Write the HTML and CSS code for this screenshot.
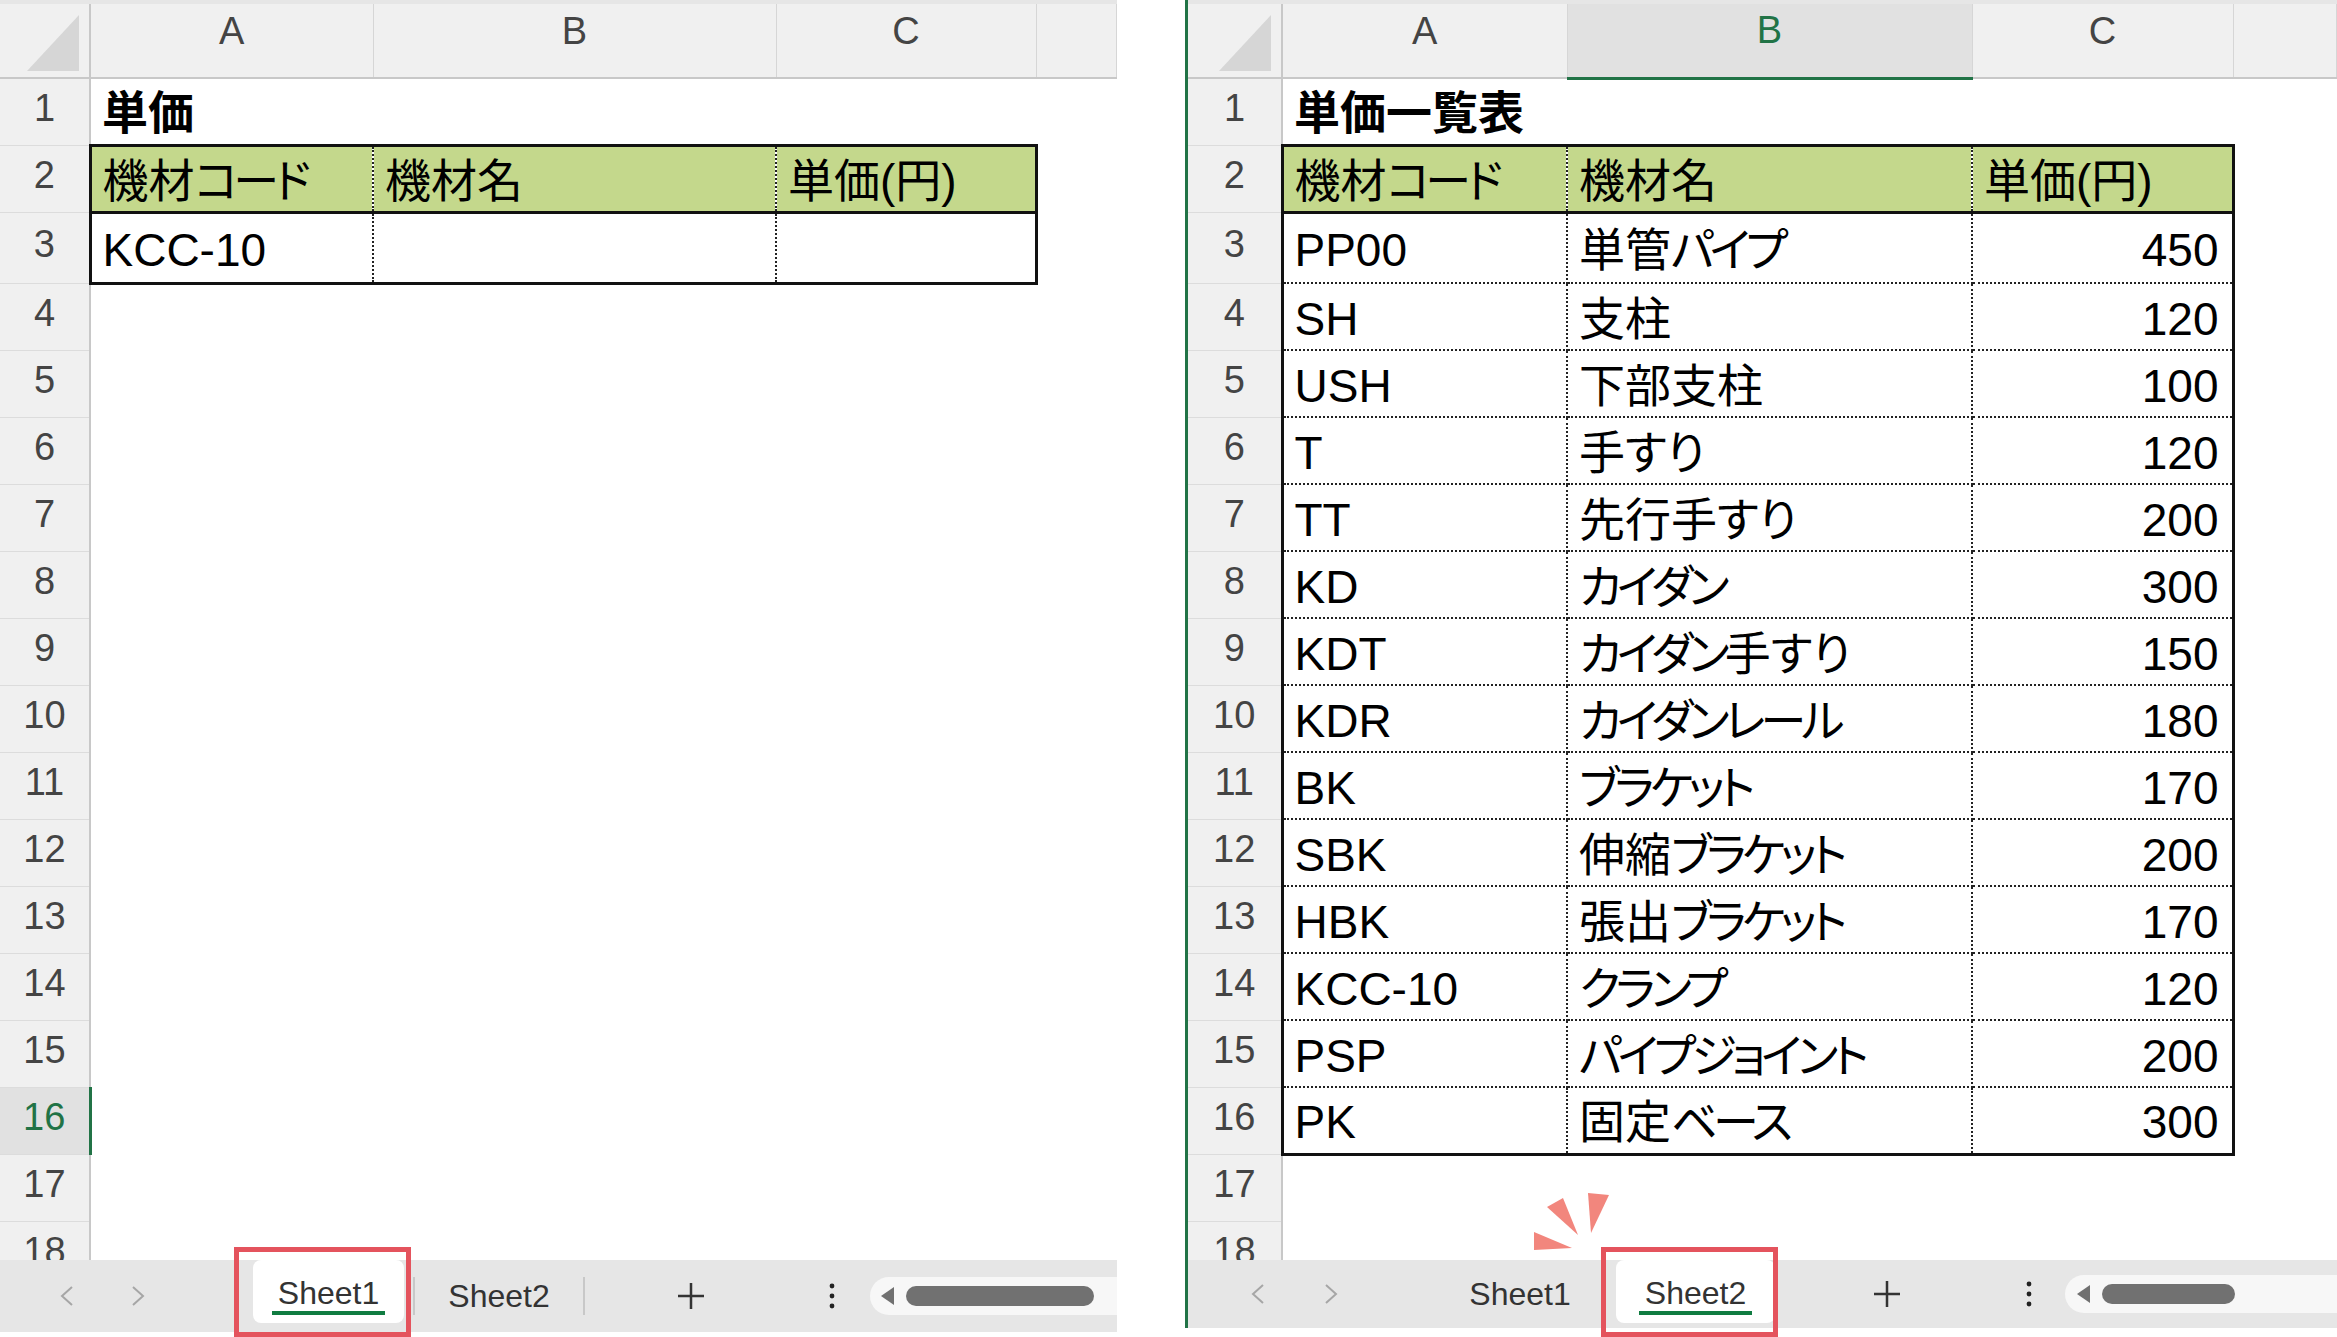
FILE: index.html
```html
<!DOCTYPE html>
<html>
  <head>
    <title>単価一覧表</title>
    <link rel="stylesheet" href="styles.css">
  </head>
  <body>
    <div class="screen">
      <section class="panel panel-left">
        <div class="sheet">
          <table class="grid">
            <colgroup>
              <col class="c-head"><col class="c-a"><col class="c-b"><col class="c-c"><col>
            </colgroup>
            <tr class="col-head">
              <th class="corner"><div class="tri"></div></th><th>A</th><th>B</th><th>C</th><th></th>
            </tr>
            <tr><th>1</th><td class="title">単価</td><td></td><td></td><td></td></tr>
            <tr><th>2</th><td class="hd first dot">機材<span class="kana">コード</span></td><td class="hd dot">機材名</td><td class="hd last">単価(円)</td><td></td></tr>
            <tr class="tall"><th>3</th><td class="first dot end">KCC-10</td><td class="dot end"></td><td class="last end"></td><td></td></tr>
            <tr><th>4</th><td></td><td></td><td></td><td></td></tr>
            <tr><th>5</th><td></td><td></td><td></td><td></td></tr>
            <tr><th>6</th><td></td><td></td><td></td><td></td></tr>
            <tr><th>7</th><td></td><td></td><td></td><td></td></tr>
            <tr><th>8</th><td></td><td></td><td></td><td></td></tr>
            <tr><th>9</th><td></td><td></td><td></td><td></td></tr>
            <tr><th>10</th><td></td><td></td><td></td><td></td></tr>
            <tr><th>11</th><td></td><td></td><td></td><td></td></tr>
            <tr><th>12</th><td></td><td></td><td></td><td></td></tr>
            <tr><th>13</th><td></td><td></td><td></td><td></td></tr>
            <tr><th>14</th><td></td><td></td><td></td><td></td></tr>
            <tr><th>15</th><td></td><td></td><td></td><td></td></tr>
            <tr><th class="sel-row">16</th><td></td><td></td><td></td><td></td></tr>
            <tr><th>17</th><td></td><td></td><td></td><td></td></tr>
            <tr><th>18</th><td></td><td></td><td></td><td></td></tr>
          </table>
        </div>
        <div class="tabbar">
          <div class="nav">
            <svg width="14" height="22" viewBox="0 0 14 22"><polyline points="12,2 2,11 12,20" /></svg>
            <svg width="14" height="22" viewBox="0 0 14 22"><polyline points="2,2 12,11 2,20" /></svg>
          </div>
          <div class="tab tab-active">
            <span class="label">Sheet1</span>
            <span class="highlight"></span>
          </div>
          <div class="tab tab-sep">Sheet2</div>
          <div class="add">
            <svg width="28" height="28" viewBox="0 0 28 28"><path d="M14 1v26M1 14h26" /></svg>
          </div>
          <div class="more">
            <svg width="6" height="26" viewBox="0 0 6 26"><circle cx="3" cy="3" r="2.4" /><circle cx="3" cy="13" r="2.4" /><circle cx="3" cy="23" r="2.4" /></svg>
          </div>
          <div class="scroll">
            <svg class="arrow" width="16" height="20" viewBox="0 0 16 20"><path d="M15 1L2 10l13 9z" /></svg>
            <span class="thumb"></span>
          </div>
        </div>
      </section>

      <section class="panel panel-right">
        <div class="sheet">
          <table class="grid">
            <colgroup>
              <col class="c-head"><col class="c-a"><col class="c-b"><col class="c-c"><col>
            </colgroup>
            <tr class="col-head">
              <th class="corner"><div class="tri"></div></th><th>A</th><th class="sel-col">B</th><th>C</th><th></th>
            </tr>
            <tr><th>1</th><td class="title">単価一覧表</td><td></td><td></td><td></td></tr>
            <tr><th>2</th><td class="hd first dot">機材<span class="kana">コード</span></td><td class="hd dot">機材名</td><td class="hd last">単価(円)</td><td></td></tr>
            <tr class="tall"><th>3</th><td class="first dot line">PP00</td><td class="dot line">単管<span class="kana">パイプ</span></td><td class="last line num">450</td><td></td></tr>
            <tr><th>4</th><td class="first dot line">SH</td><td class="dot line">支柱</td><td class="last line num">120</td><td></td></tr>
            <tr><th>5</th><td class="first dot line">USH</td><td class="dot line">下部支柱</td><td class="last line num">100</td><td></td></tr>
            <tr><th>6</th><td class="first dot line">T</td><td class="dot line">手すり</td><td class="last line num">120</td><td></td></tr>
            <tr><th>7</th><td class="first dot line">TT</td><td class="dot line">先行手すり</td><td class="last line num">200</td><td></td></tr>
            <tr><th>8</th><td class="first dot line">KD</td><td class="dot line"><span class="kana">カイダン</span></td><td class="last line num">300</td><td></td></tr>
            <tr><th>9</th><td class="first dot line">KDT</td><td class="dot line"><span class="kana">カイダン</span>手すり</td><td class="last line num">150</td><td></td></tr>
            <tr><th>10</th><td class="first dot line">KDR</td><td class="dot line"><span class="kana">カイダンレール</span></td><td class="last line num">180</td><td></td></tr>
            <tr><th>11</th><td class="first dot line">BK</td><td class="dot line"><span class="kana">ブラケット</span></td><td class="last line num">170</td><td></td></tr>
            <tr><th>12</th><td class="first dot line">SBK</td><td class="dot line">伸縮<span class="kana">ブラケット</span></td><td class="last line num">200</td><td></td></tr>
            <tr><th>13</th><td class="first dot line">HBK</td><td class="dot line">張出<span class="kana">ブラケット</span></td><td class="last line num">170</td><td></td></tr>
            <tr><th>14</th><td class="first dot line">KCC-10</td><td class="dot line"><span class="kana">クランプ</span></td><td class="last line num">120</td><td></td></tr>
            <tr><th>15</th><td class="first dot line">PSP</td><td class="dot line"><span class="kana">パイプジョイント</span></td><td class="last line num">200</td><td></td></tr>
            <tr><th>16</th><td class="first dot end">PK</td><td class="dot end">固定<span class="kana">ベース</span></td><td class="last end num">300</td><td></td></tr>
            <tr><th>17</th><td></td><td></td><td></td><td></td></tr>
            <tr><th>18</th><td></td><td></td><td></td><td></td></tr>
          </table>
        </div>
        <div class="tabbar">
          <div class="nav">
            <svg width="14" height="22" viewBox="0 0 14 22"><polyline points="12,2 2,11 12,20" /></svg>
            <svg width="14" height="22" viewBox="0 0 14 22"><polyline points="2,2 12,11 2,20" /></svg>
          </div>
          <div class="tab">Sheet1</div>
          <div class="tab tab-active">
            <span class="label">Sheet2</span>
            <span class="highlight"></span>
            <svg class="rays" width="82" height="64" viewBox="0 0 82 64">
              <polygon points="4,42 4,60 42,58" />
              <polygon points="17,17 33,8 48,45" />
              <polygon points="58,3 79,5 61,43" />
            </svg>
          </div>
          <div class="add">
            <svg width="28" height="28" viewBox="0 0 28 28"><path d="M14 1v26M1 14h26" /></svg>
          </div>
          <div class="more">
            <svg width="6" height="26" viewBox="0 0 6 26"><circle cx="3" cy="3" r="2.4" /><circle cx="3" cy="13" r="2.4" /><circle cx="3" cy="23" r="2.4" /></svg>
          </div>
          <div class="scroll">
            <svg class="arrow" width="16" height="20" viewBox="0 0 16 20"><path d="M15 1L2 10l13 9z" /></svg>
            <span class="thumb"></span>
          </div>
        </div>
      </section>
    </div>
  </body>
</html>
```

FILE: styles.css
```css
body {
  margin: 0;
  background-color: #fff;
  font-family: "Liberation Sans", "Noto Sans CJK JP", sans-serif;
}

.screen {
  display: flex;
  height: 1337px;
  overflow: hidden;
}

.panel {
  display: flex;
  flex-direction: column;
}
.panel-left {
  width: 1117px;
  margin-right: 68px;
}
.panel-right {
  flex: 1;
  min-width: 0;
  height: 1328px;
  border-left: 3px solid #217346;
}

.sheet {
  height: 1260px;
  overflow: hidden;
  box-sizing: border-box;
  border-top: 4px solid #e6e6e6;
  flex-shrink: 0;
}

/* spreadsheet grid */
.grid {
  width: 100%;
  border-collapse: collapse;
  table-layout: fixed;
}
.panel-left .c-head { width: 90px; }
.panel-left .c-a { width: 283px; }
.panel-left .c-b { width: 403px; }
.panel-left .c-c { width: 260px; }
.panel-right .c-head { width: 94px; }
.panel-right .c-a { width: 285px; }
.panel-right .c-b { width: 405px; }
.panel-right .c-c { width: 261px; }

.grid tr {
  height: 67px;
}
.grid tr.tall {
  height: 71px;
}
.grid tr.col-head {
  height: 74px;
}

th {
  padding: 0 0 6px;
  background-color: #f0f0f0;
  color: #444;
  font-weight: normal;
  font-size: 38px;
  line-height: 1.1;
  text-align: center;
  border-right: 2px solid #c8c8c8;
  border-bottom: 1px solid #dcdcdc;
}
.col-head th {
  padding-bottom: 18px;
  border-right: 1px solid #d6d6d6;
  border-bottom: 2px solid #c8c8c8;
}
.col-head th.corner {
  padding: 0;
  vertical-align: bottom;
  border-right: 2px solid #c8c8c8;
}
.tri {
  width: 52px;
  height: 56px;
  margin: 0 10px 6px auto;
  background-color: #d6d6d6;
  clip-path: polygon(100% 0, 100% 100%, 0 100%);
}
th.sel-row {
  background-color: #e1e1e1;
  color: #217346;
  border-right: 3px solid #217346;
}
.col-head th.sel-col {
  background-color: #e1e1e1;
  color: #217346;
  border-bottom: 3px solid #217346;
}

td {
  padding: 5px 0 0 11px;
  font-size: 46px;
  line-height: 1.1;
  color: #000;
  white-space: nowrap;
  overflow: hidden;
  font-feature-settings: "palt";
}
td .kana {
  letter-spacing: -0.1em;
}
td.title {
  font-weight: bold;
}
td.hd {
  background-color: #c4d88c;
  border-top: 3px solid #111;
  border-bottom: 3px solid #111;
}
td.first {
  border-left: 3px solid #111;
}
td.last {
  border-right: 3px solid #111;
}
td.dot {
  border-right: 2px dotted #222;
}
td.line {
  border-bottom: 2px dotted #222;
}
td.end {
  border-bottom: 3px solid #111;
}
td.num {
  text-align: right;
  padding: 5px 13px 0 0;
}

/* sheet tabs */
.tabbar {
  display: flex;
  align-items: center;
  height: 72px;
  background-color: #e6e6e6;
  font-size: 32px;
  color: #333;
  flex-shrink: 0;
}
.panel-right .tabbar {
  height: 68px;
}

.nav {
  display: flex;
  gap: 57px;
  width: 245px;
  padding-left: 60px;
  box-sizing: border-box;
}
.panel-right .nav {
  padding-left: 63px;
  gap: 59px;
}
.nav polyline {
  fill: none;
  stroke: #a6a6a6;
  stroke-width: 2;
}

.tab {
  width: 172px;
  text-align: center;
  flex-shrink: 0;
}
.panel-right .tab {
  margin-left: 1px;
}
.tab-sep {
  height: 38px;
  line-height: 38px;
  margin-left: 9px;
  box-sizing: border-box;
  border-left: 2px solid #c8c8c8;
  border-right: 2px solid #c8c8c8;
}
.tab-active {
  position: relative;
  align-self: flex-start;
  display: flex;
  align-items: center;
  justify-content: center;
  width: 151px;
  height: 63px;
  margin-left: 8px;
  padding-top: 8px;
  box-sizing: border-box;
  background-color: #fff;
  border-radius: 8px;
}
.panel-right .tab-active {
  width: 159px;
  margin-left: 10px;
}
.tab-active .label {
  line-height: 1;
  padding: 0 6px 2px;
  border-bottom: 4px solid #107c41;
}
.highlight {
  position: absolute;
  left: -19px;
  right: -7px;
  top: -13px;
  bottom: -14px;
  border: 5px solid #e4535d;
}
.panel-right .highlight {
  left: -15px;
  right: -3px;
}
.rays {
  position: absolute;
  left: -86px;
  top: -70px;
}
.rays polygon {
  fill: #f2867d;
}

.add {
  display: flex;
  justify-content: center;
  width: 212px;
  flex-shrink: 0;
}
.panel-right .add {
  width: 224px;
}
.add path {
  stroke: #333;
  stroke-width: 2.5;
}

.more {
  display: flex;
  justify-content: center;
  width: 70px;
  flex-shrink: 0;
}
.panel-right .more {
  width: 60px;
}
.more circle {
  fill: #222;
}

.scroll {
  flex: 1;
  display: flex;
  align-items: center;
  height: 38px;
  margin-left: 3px;
  background-color: #f7f7f7;
  border-radius: 19px 0 0 19px;
}
.panel-right .scroll {
  margin-left: 6px;
}
.scroll .arrow {
  margin-left: 9px;
  fill: #707070;
}
.panel-right .scroll .arrow {
  margin-left: 10px;
}
.thumb {
  width: 188px;
  height: 20px;
  margin-left: 11px;
  border-radius: 10px;
  background-color: #717171;
}
.panel-right .thumb {
  width: 133px;
}
```
